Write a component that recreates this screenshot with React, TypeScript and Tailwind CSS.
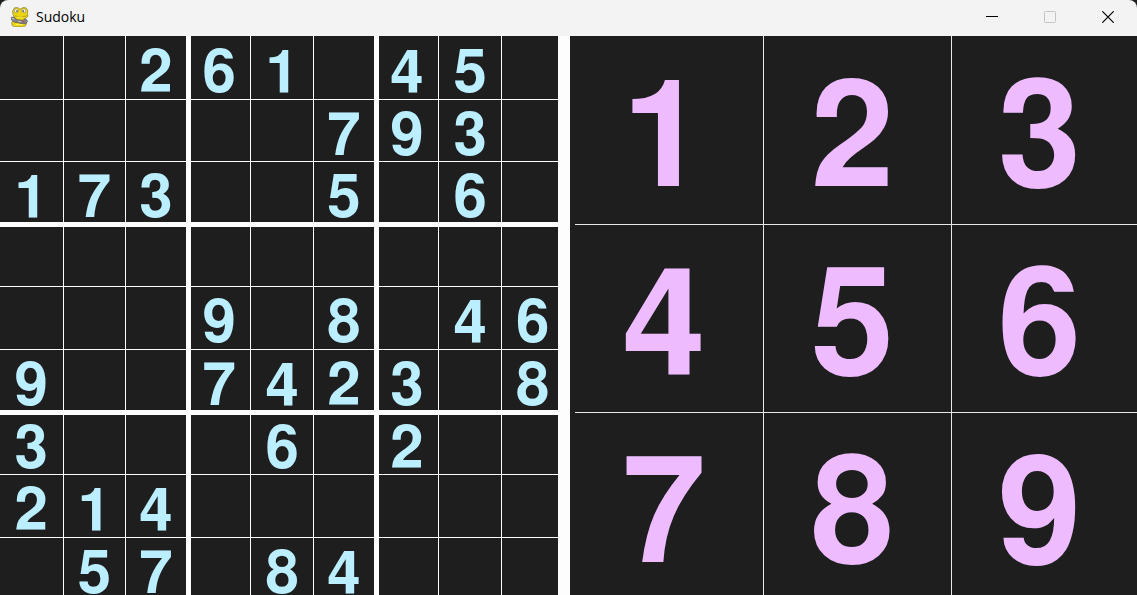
import React from 'react';

const PUZZLE = [
  '..261.45.',
  '.....793.',
  '173..5.6.',
  '.........',
  '...9.8.46',
  '9..7423.8',
  '3...6.2..',
  '214......',
  '.57.84...',
];

const DIGIT_FONT = "font-['FreeSans','Liberation_Sans',Arial,sans-serif]";

function PygameIcon() {
  return (
    <svg viewBox="0 0 20 20" className="h-5 w-5" aria-hidden="true">
      <path d="M3 7.500 2.600 4 4.500.8 7.500.4 9.300 1.800h2L13 .5l3 .3 1.700 2.400-.2 3.500.6 2.300-1.800 2-2.300.8.8 2 1.600 2.200-.6 2.600-2.200 1.200-4.600.1-4.500-.1-2.400-1.300-.4-2.800 1.600-2.600L4.500 10z" fill="#edd60f" stroke="#77702a" strokeWidth=".6" />
      <path d="M5 8.800c3 1.500 8 1.400 12-.1" fill="none" stroke="#a08a0c" strokeWidth=".7" />
      <path d="M6.800 10.200h6" stroke="#fff05c" strokeWidth="1" />
      <circle cx="6.300" cy="3.800" r="2" fill="#f5f5ef" stroke="#777347" strokeWidth=".5" />
      <circle cx="13.800" cy="3.800" r="2" fill="#f5f5ef" stroke="#777347" strokeWidth=".5" />
      <circle cx="7" cy="4.100" r=".8" fill="#333" />
      <circle cx="13.200" cy="4.100" r=".8" fill="#333" />
      <path d="m1.200 10.300 2.600-.2 3.200 2.600 5.800.6 3.200-1.200 1.600 2.200-1.600 2.400-3.800.3-4.200-1.400-3.800-.4-2.600-2.100z" fill="#85858a" stroke="#4c4c50" strokeWidth=".6" />
      <path d="m1.800 11.400 2.600.8m4 2 2.400.4" stroke="#ddd" strokeWidth=".9" />
      <circle cx="13.400" cy="14.800" r="1.100" fill="#b75a50" />
      <path d="M5.600 17.600h7.600" stroke="#fff05c" strokeWidth="1" />
    </svg>
  );
}

function TitleBar() {
  const control = 'flex h-9 w-[58px] items-center justify-center';
  return (
    <header className="flex h-9 shrink-0 items-center rounded-t-lg bg-[#f3f3f3] pb-[3px] pl-[10px]">
      <PygameIcon />
      <h1 className="ml-[6px] grow font-['Segoe_UI','Open_Sans',sans-serif] text-[14px] leading-5 text-black">Sudoku</h1>
      <button type="button" aria-label="Minimize" className={control}>
        <svg viewBox="0 0 12 12" className="h-3 w-3"><path d="M0 5.500h12" stroke="#000" /></svg>
      </button>
      <button type="button" aria-label="Maximize" disabled className={control}>
        <svg viewBox="0 0 12 12" className="h-3 w-3"><rect x=".5" y=".5" width="11" height="11" rx="1" fill="none" stroke="#c4c4c4" /></svg>
      </button>
      <button type="button" aria-label="Close" className={control}>
        <svg viewBox="0 0 12 12" className="h-3 w-3"><path d="m.3.3 11.400 11.400M11.700.3.3 11.700" stroke="#000" strokeWidth="1.200" /></svg>
      </button>
    </header>
  );
}

function Cell({ value, row, col }: { value: string; row: number; col: number }) {
  const left = col === 0 ? '' : col % 3 === 0 ? 'border-l-3 pr-[3px]' : 'border-l';
  const right = col % 3 === 2 && col < 8 ? 'border-r-2' : '';
  const top = row === 0 ? '' : row % 3 === 0 ? 'border-t-3' : 'border-t';
  const bottom = row % 3 === 2 && row < 8 ? 'border-b-2' : '';
  const drop = row < 3 ? 'pt-[14px]' : row === 5 ? 'pt-[14px]' : row % 3 === 0 ? 'pt-[10px]' : 'pt-3';
  return (
    <div className={`grid min-h-0 min-w-0 place-items-center border-[#fdfdfd] ${left} ${right} ${top} ${bottom} ${drop}`}>
      {value !== '.' && (
        <span className={`text-[60px] leading-10 font-bold text-[#bbeeff] ${DIGIT_FONT}`}>{value}</span>
      )}
    </div>
  );
}

function NumberKey({ value }: { value: number }) {
  const line = `${value % 3 !== 1 ? 'border-l' : ''} ${value > 3 ? 'border-t' : ''}`;
  return (
    <button type="button" className={`flex min-w-0 items-center justify-center border-[#e8e8e8] pt-[22px] pr-[10px] ${line}`}>
      <span className={`text-[150px] leading-[150px] font-bold text-[#eebbff] ${DIGIT_FONT}`}>{value}</span>
    </button>
  );
}

export default function App() {
  return (
    <div className="flex h-screen flex-col overflow-hidden bg-[#1e1e1e]">
      <TitleBar />
      <main className="grid grid-cols-[minmax(0,558fr)_12px_minmax(0,567fr)]">
        <section aria-label="Board" className="min-w-0 overflow-hidden">
          <div className="grid aspect-square w-[101%] grid-cols-9 grid-rows-9">
            {PUZZLE.flatMap((line, row) =>
              line.split('').map((value, col) => <Cell key={`${row}-${col}`} value={value} row={row} col={col} />),
            )}
          </div>
        </section>
        <div className="bg-[#fdfdfd]" />
        <section aria-label="Number pad" className="grid grid-cols-[188fr_188fr_186fr] grid-rows-3 pl-[5px]">
          {[1, 2, 3, 4, 5, 6, 7, 8, 9].map((value) => (
            <NumberKey key={value} value={value} />
          ))}
        </section>
      </main>
    </div>
  );
}
